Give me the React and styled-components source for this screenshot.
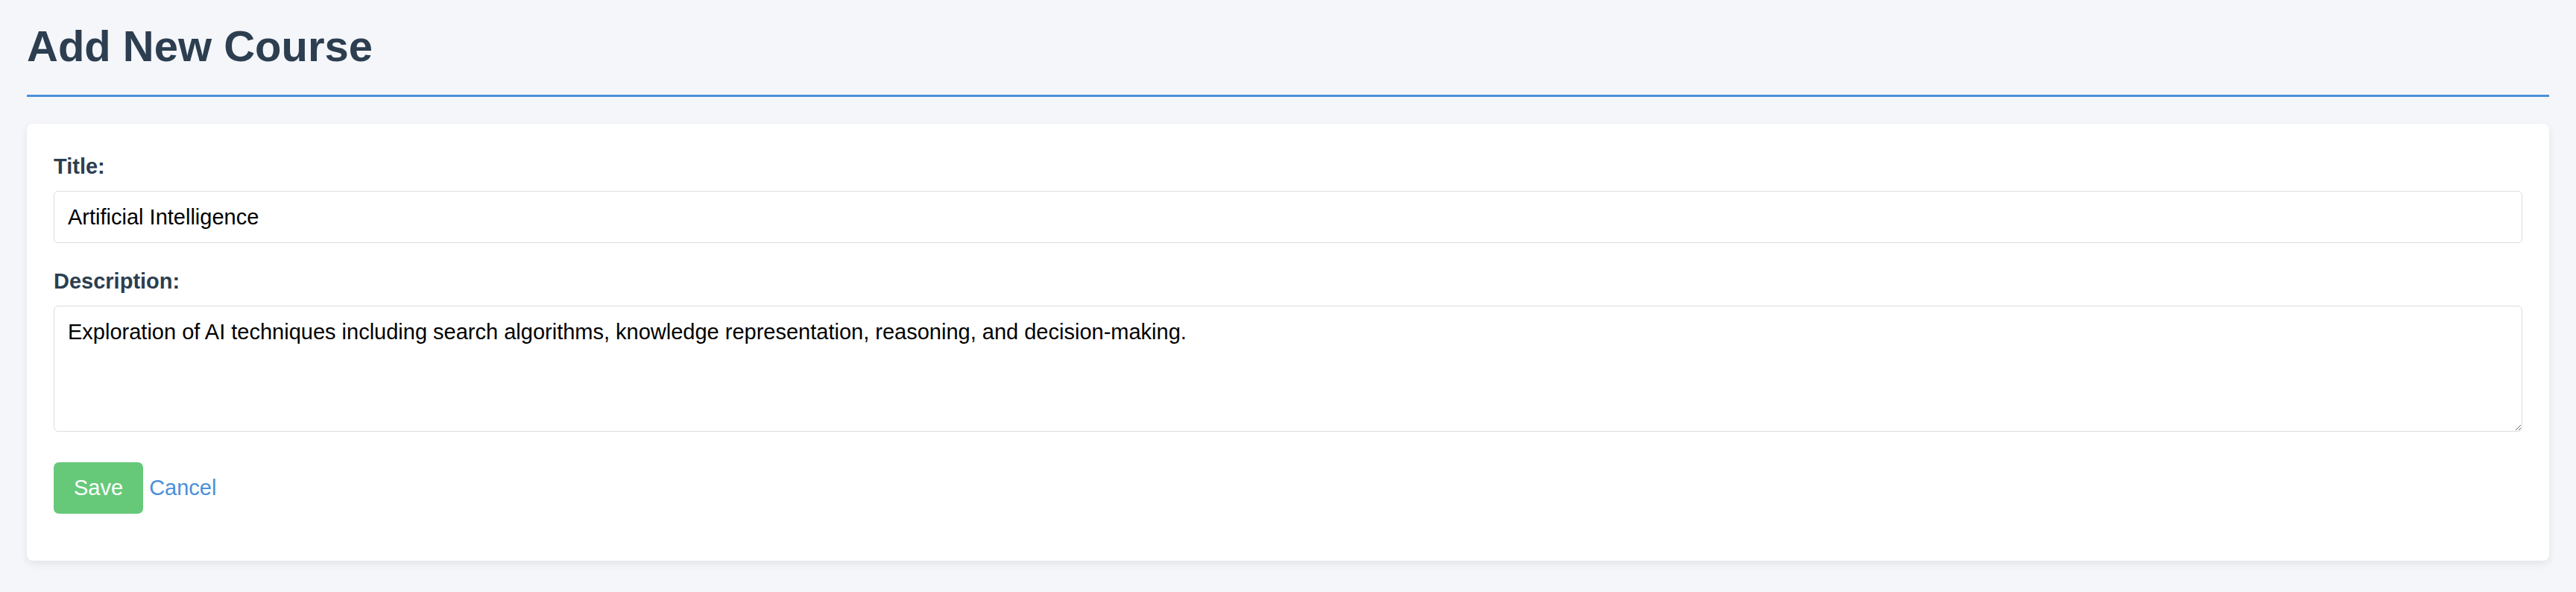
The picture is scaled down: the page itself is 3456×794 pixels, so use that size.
import React from "react";
import styled, { createGlobalStyle } from "styled-components";

const GlobalStyle = createGlobalStyle`
  body {
    margin: 0;
    background: #f5f6fa;
    font-family: "Liberation Sans", Arial, Helvetica, sans-serif;
  }
`;

export const Page = styled.div`
  padding: 29px 36px 20px;
`;

export const Heading = styled.h1`
  margin: 0 0 36px;
  padding-bottom: 32px;
  border-bottom: 3px solid #4a90d9;
  color: #2c3e50;
  font-size: 58px;
  line-height: 66px;
  font-weight: bold;
`;

export const Card = styled.form`
  background: #fff;
  border-radius: 8px;
  box-shadow: 0 4px 11px rgba(0, 0, 0, 0.08);
  padding: 41px 36px 63px;
`;

export const FormGroup = styled.div`
  margin-bottom: ${(props) => props.$space || 35}px;
`;

export const Label = styled.label`
  display: block;
  margin-bottom: 16px;
  color: #2c3e50;
  font-size: 29px;
  line-height: 33px;
  font-weight: bold;
`;

const fieldBase = `
  display: block;
  width: 100%;
  box-sizing: border-box;
  border: 1px solid #dcdcdc;
  border-radius: 6px;
  padding: 17px 18px;
  font-family: "Liberation Sans", Arial, Helvetica, sans-serif;
  font-size: 29px;
  line-height: 34px;
  color: #000;
  background: #fff;
  outline: none;
`;

export const TextInput = styled.input`
  ${fieldBase}
  height: 70px;
`;

export const TextArea = styled.textarea`
  ${fieldBase}
  height: 169px;
  resize: vertical;
`;

export const Actions = styled.div`
  font-size: 29px;
  line-height: 33px;
`;

export const SaveButton = styled.button`
  display: inline-block;
  vertical-align: baseline;
  border: none;
  border-radius: 7px;
  padding: 18px 27px;
  background: #66c97a;
  color: #fff;
  font-family: "Liberation Sans", Arial, Helvetica, sans-serif;
  font-size: 29px;
  line-height: 33px;
  cursor: pointer;
`;

export const CancelLink = styled.a`
  color: #4a90d9;
  text-decoration: none;
  font-size: 29px;
`;

function App() {
  return (
    <>
      <GlobalStyle />
      <Page>
        <Heading>Add New Course</Heading>
        <Card onSubmit={(e) => e.preventDefault()}>
          <FormGroup>
            <Label htmlFor="title">Title:</Label>
            <TextInput
              id="title"
              type="text"
              defaultValue="Artificial Intelligence"
            />
          </FormGroup>
          <FormGroup $space={41}>
            <Label htmlFor="description">Description:</Label>
            <TextArea
              id="description"
              defaultValue="Exploration of AI techniques including search algorithms, knowledge representation, reasoning, and decision-making."
            />
          </FormGroup>
          <Actions>
            <SaveButton type="submit">Save</SaveButton>{" "}
            <CancelLink href="#">Cancel</CancelLink>
          </Actions>
        </Card>
      </Page>
    </>
  );
}

export default App;
